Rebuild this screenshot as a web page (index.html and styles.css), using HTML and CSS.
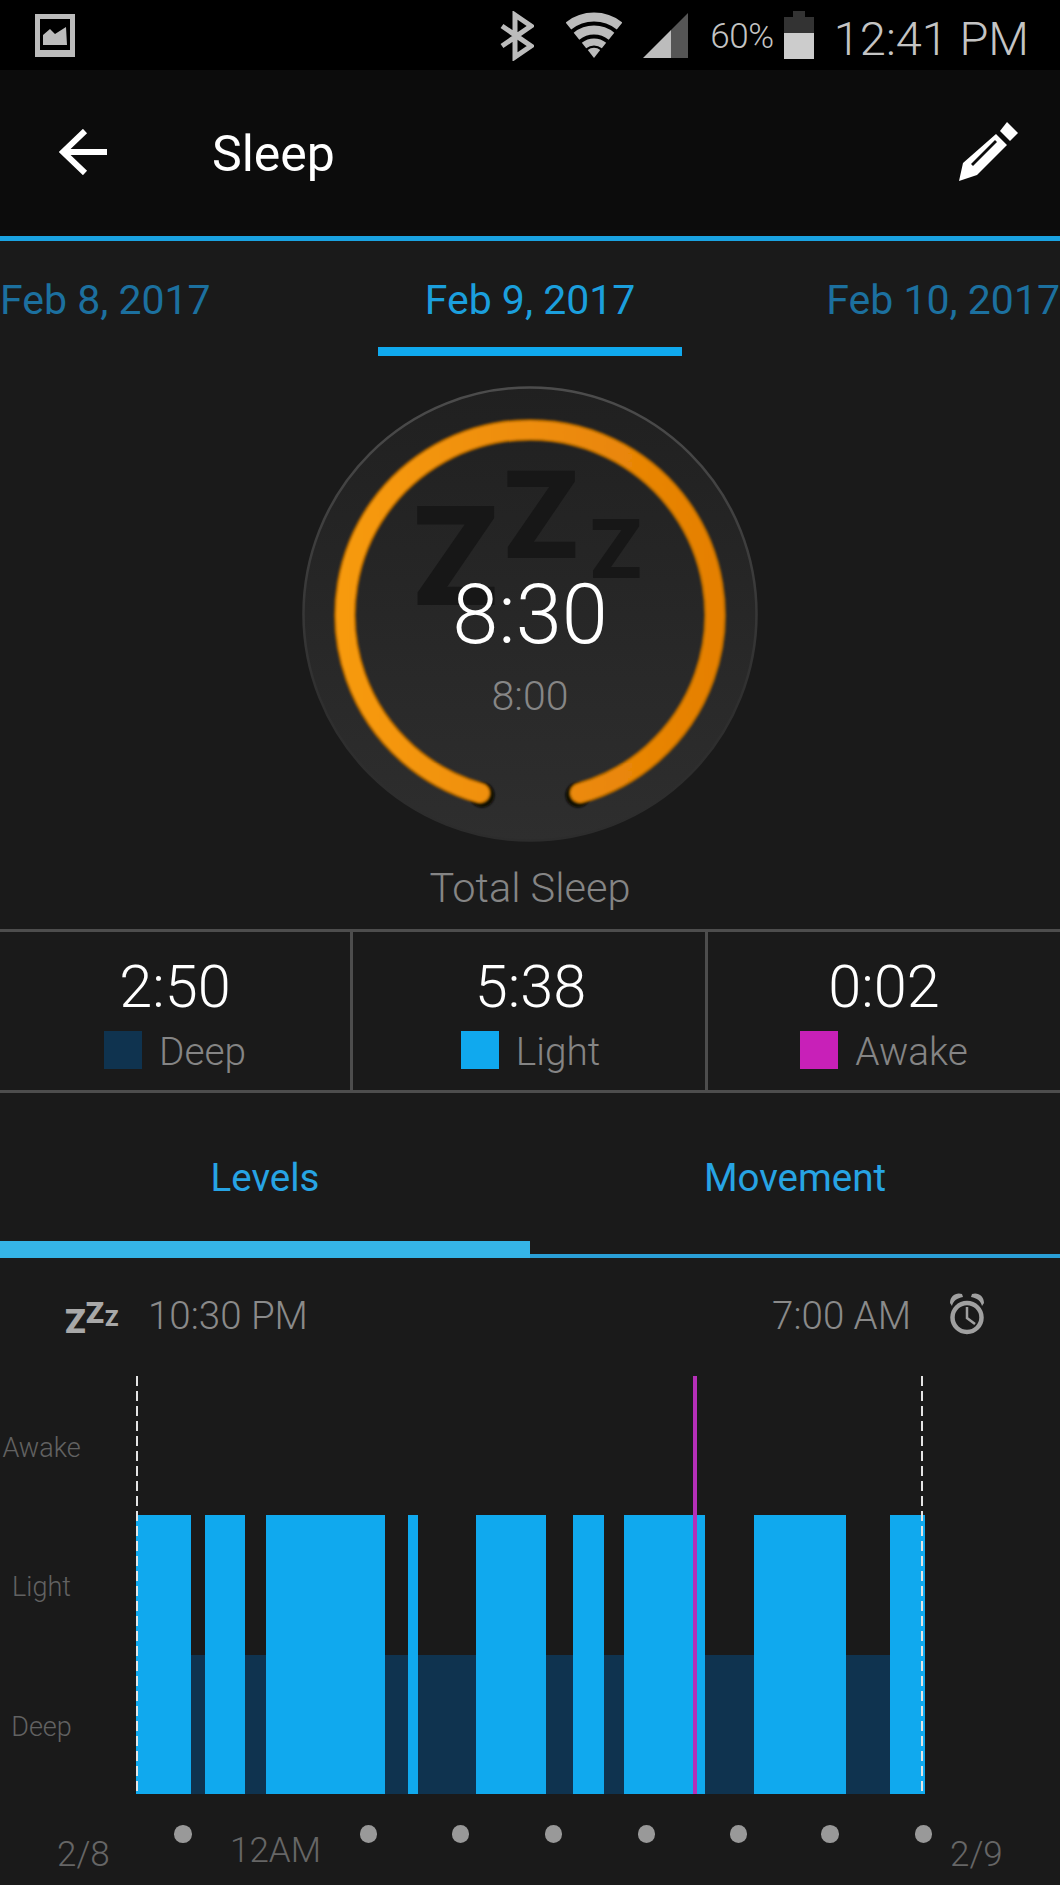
FILE: index.html
```html
<!DOCTYPE html>
<html lang="en">
<head>
<meta charset="utf-8">
<title>Sleep</title>
<link rel="stylesheet" href="styles.css">
</head>
<body>
<div class="page">
  <div class="status">
    <svg class="ic-image" viewBox="0 0 40 43"><path fill="#bcbcbc" fill-rule="evenodd" d="M0 0H40V43H0ZM5 5V36H35V5Z"/><path fill="#bcbcbc" d="M8 31V21L15 15L20 20L31 13L32 31Z"/></svg>
    <div class="status-right">
      <svg class="ic-bt" viewBox="0 0 34 50"><path fill="none" stroke="#bcbcbc" stroke-width="5" d="M2 15L31 35L15 46V4L31 15L2 35"/></svg>
      <svg class="ic-wifi" viewBox="0 0 56 46"><g fill="none" stroke="#bcbcbc" stroke-width="9"><path d="M2.400 14A41 41 0 0 1 53.600 14"/><path d="M10.500 24.200A28 28 0 0 1 45.500 24.200"/></g><path fill="none" stroke="#bcbcbc" stroke-width="7" d="M18 33.500A16 16 0 0 1 38 33.500"/><path fill="#bcbcbc" d="M28 46L21.800 38A10 10 0 0 1 34.200 38Z"/></svg>
      <svg class="ic-signal" viewBox="0 0 45 45"><path fill="#555" d="M28 45V17L45 0V45Z"/><path fill="#bcbcbc" d="M0 45L28 17V45Z"/></svg>
      <span class="batt-pct">60%</span>
      <div class="battery"><div class="batt-nub"></div><div class="batt-empty"></div><div class="batt-full"></div></div>
      <span class="clock">12:41 PM</span>
    </div>
  </div>

  <header class="appbar">
    <svg class="ic-back" viewBox="0 0 48 46"><path fill="none" stroke="#fff" stroke-width="6" d="M48 23H4M26 2L4 23L26 44"/></svg>
    <h1 class="title">Sleep</h1>
    <svg class="ic-pencil" viewBox="0 0 60 60"><path fill="#fff" d="M48 0L59 11L51 19L41 9Z"/><path fill="#fff" fill-rule="evenodd" d="M0 59L4 41L37 12L48 23L18 53ZM12 42L14 44L38 20L36 18Z"/></svg>
  </header>

  <nav class="dates">
    <span class="date">Feb 8, 2017</span>
    <span class="date date-current">Feb 9, 2017</span>
    <span class="date date-next">Feb 10, 2017</span>
  </nav>

  <section class="summary">
    <div class="dial">
      <svg class="dial-art" viewBox="0 0 456 456">
        <defs>
          <linearGradient id="face" x1="0" y1="0" x2="0" y2="1"><stop offset="0" stop-color="#202020"/><stop offset="1" stop-color="#2e2e2e"/></linearGradient>
          <linearGradient id="rim" x1="0" y1="0" x2="0" y2="1"><stop offset="0" stop-color="#4c4c4c"/><stop offset=".7" stop-color="#2f2f2f"/><stop offset="1" stop-color="#2c2c2c"/></linearGradient>
          <linearGradient id="ring" x1="0" y1="0" x2="1" y2="0"><stop offset="0" stop-color="#f79a10"/><stop offset="1" stop-color="#e58004"/></linearGradient>
          <filter id="soft"><feGaussianBlur stdDeviation="1.200"/></filter>
        </defs>
        <circle cx="228" cy="228" r="226.500" fill="url(#face)" stroke="url(#rim)" stroke-width="2.500"/>
        <circle cx="180" cy="409" r="12.500" fill="#0c0804" filter="url(#soft)"/>
        <circle cx="276" cy="409" r="12.500" fill="#0c0804" filter="url(#soft)"/>
        <path d="M178 407A185 185 0 1 1 278 407" fill="none" stroke="#a86200" stroke-width="22" stroke-linecap="round" filter="url(#soft)"/>
        <path d="M178 407A185 185 0 1 1 278 407" fill="none" stroke="url(#ring)" stroke-width="18" stroke-linecap="round" filter="url(#soft)"/>
      </svg>
      <div class="zzz"><span class="z z1">Z</span><span class="z z2">Z</span><span class="z z3">Z</span></div>
      <div class="dial-text">
        <div class="dial-value">8:30</div>
        <div class="dial-goal">8:00</div>
      </div>
    </div>
    <div class="summary-label">Total Sleep</div>
  </section>

  <section class="stats">
    <div class="stat">
      <div class="stat-value">2:50</div>
      <div class="stat-legend"><i class="swatch swatch-deep"></i><span>Deep</span></div>
    </div>
    <div class="stat">
      <div class="stat-value">5:38</div>
      <div class="stat-legend"><i class="swatch swatch-light"></i><span>Light</span></div>
    </div>
    <div class="stat">
      <div class="stat-value">0:02</div>
      <div class="stat-legend"><i class="swatch swatch-awake"></i><span>Awake</span></div>
    </div>
  </section>

  <nav class="tabs">
    <div class="tab tab-active">Levels</div>
    <div class="tab">Movement</div>
  </nav>

  <div class="times">
    <div class="times-group">
      <div class="zzz-small"><span class="zs zs1">Z</span><span class="zs zs2">Z</span><span class="zs zs3">Z</span></div>
      <span class="time">10:30 PM</span>
    </div>
    <div class="times-group">
      <span class="time">7:00 AM</span>
      <svg class="ic-alarm" viewBox="0 0 34 42"><circle cx="17" cy="24.500" r="14.500" fill="none" stroke="#a0a0a0" stroke-width="4.500"/><path fill="none" stroke="#a0a0a0" stroke-width="2.500" d="M17 14V25L25 31"/><path fill="#a0a0a0" d="M0 10C0 3 6 -1 12 1L13 4C7 5 3 8 2 13ZM34 10C34 3 28 -1 22 1L21 4C27 5 31 8 32 13Z"/></svg>
    </div>
  </div>

  <section class="chart">
    <div class="levels">
      <span>Awake</span>
      <span>Light</span>
      <span>Deep</span>
    </div>
    <div class="plot">
      <div class="bars">
        <div class="bar bar-light" style="width:55.4px"></div>
        <div class="bar bar-deep" style="width:14.5px"></div>
        <div class="bar bar-light" style="width:39.5px"></div>
        <div class="bar bar-deep" style="width:21px"></div>
        <div class="bar bar-light" style="width:119.4px"></div>
        <div class="bar bar-deep" style="width:22.6px"></div>
        <div class="bar bar-light" style="width:10px"></div>
        <div class="bar bar-deep" style="width:57.6px"></div>
        <div class="bar bar-light" style="width:70px"></div>
        <div class="bar bar-deep" style="width:27.4px"></div>
        <div class="bar bar-light" style="width:31.4px"></div>
        <div class="bar bar-deep" style="width:19.2px"></div>
        <div class="bar bar-light" style="width:81.2px"></div>
        <div class="bar bar-deep" style="width:49.2px"></div>
        <div class="bar bar-light" style="width:92px"></div>
        <div class="bar bar-deep" style="width:44px"></div>
        <div class="bar bar-light" style="width:35px"></div>
      </div>
      <div class="edge edge-start"></div>
      <div class="edge edge-end"></div>
      <div class="awake-mark" style="left:557.7px"></div>
    </div>
  </section>

  <div class="axis">
    <span class="axis-label axis-start">2/8</span>
    <span class="axis-label axis-mid">12AM</span>
    <span class="axis-label axis-end">2/9</span>
    <i class="tick" style="left:174px"></i>
    <i class="tick" style="left:359.500px"></i>
    <i class="tick" style="left:451.500px"></i>
    <i class="tick" style="left:544.500px"></i>
    <i class="tick" style="left:637.500px"></i>
    <i class="tick" style="left:729.500px"></i>
    <i class="tick" style="left:821px"></i>
    <i class="tick" style="left:914.500px"></i>
  </div>
</div>
</body>
</html>
```
FILE: styles.css
```css
* { box-sizing: border-box; }
html, body { margin: 0; padding: 0; background: #1a1a1a; }
body { font-family: Roboto, "Liberation Sans", sans-serif; }
.page { width: 1060px; height: 1885px; overflow: hidden; background: #1a1a1a; }

/* status bar */
.status { height: 70px; background: #000; display: flex; align-items: flex-start; padding: 14px 31px 0 35px; justify-content: space-between; }
.ic-image { width: 40px; height: 43px; display: block; }
.status-right { display: flex; align-items: flex-start; margin-top: -3px; }
.ic-bt { width: 34px; height: 50px; display: block; margin-top: 0; }
.ic-wifi { width: 56px; height: 46px; display: block; margin: 1px 0 0 32px; }
.ic-signal { width: 45px; height: 45px; display: block; margin: 2px 0 0 21px; }
.batt-pct { font-size: 35px; font-weight: 300; color: #c4c4c4; line-height: 41px; margin: 5px 0 0 22px; letter-spacing: -.4px; }
.battery { width: 30px; margin: 0 0 0 10px; display: flex; flex-direction: column; align-items: center; }
.batt-nub { width: 12px; height: 6px; background: #333; }
.batt-empty { width: 30px; height: 16px; background: #333; }
.batt-full { width: 30px; height: 26px; background: #ccc; }
.clock { font-size: 47px; font-weight: 300; color: #c4c4c4; line-height: 54px; margin: 1px 0 0 20px; }

/* app bar */
.appbar { height: 171px; background: #0c0c0c; border-bottom: 5px solid #1aa3e2; display: flex; align-items: center; padding: 0 41px 0 59px; }
.ic-back { width: 48px; height: 46px; display: block; margin-top: -2px; }
.title { margin: 0 0 0 105px; font-size: 50px; font-weight: 400; color: #fff; line-height: 58px; padding-top: 2px; flex: 1; }
.ic-pencil { width: 60px; height: 60px; display: block; margin-top: -2px; }

/* dates */
.dates { height: 115px; display: grid; grid-template-columns: 1fr 304px 1fr; align-items: start; padding-top: 35px; }
.date { font-size: 41px; line-height: 48px; color: #1c709f; height: 80px; white-space: nowrap; }
.date-current { color: #1b9fdd; text-align: center; border-bottom: 9px solid #10a9ee; }
.date-next { text-align: right; }

/* summary */
.summary { display: flex; flex-direction: column; align-items: center; padding-top: 30px; height: 573px; }
.dial { width: 456px; height: 456px; position: relative; flex: none; }
.dial-art { width: 456px; height: 456px; display: block; }
.zzz { position: absolute; left: 111px; top: 70px; white-space: nowrap; color: #171717; font-weight: 900; line-height: 1; height: 130px; }
.z { display: inline-block; }
.z1 { font-size: 139px; }
.z2 { font-size: 122px; vertical-align: 47px; margin-left: 6px; }
.z3 { font-size: 84px; vertical-align: 27px; margin-left: 12px; }
.dial-text { position: absolute; left: 0; right: 0; top: 179px; display: flex; flex-direction: column; align-items: center; }
.dial-value { font-size: 83px; font-weight: 300; line-height: 100px; color: #fff; }
.dial-goal { font-size: 41px; font-weight: 300; line-height: 52px; color: #868686; margin-top: 5px; }
.summary-label { font-size: 41.500px; font-weight: 300; line-height: 50px; color: #858585; margin-top: 21px; }

/* stats */
.stats { height: 164px; display: grid; grid-template-columns: 353px 355px 1fr; border-top: 3px solid #4d4d4d; border-bottom: 3px solid #4d4d4d; }
.stat { display: flex; flex-direction: column; align-items: center; padding-top: 27px; border-right: 3px solid #4d4d4d; }
.stat:nth-child(2) { padding-left: 3px; }
.stat:last-child { border-right: 0; }
.stat-value { font-size: 59.500px; font-weight: 300; line-height: 56px; color: #fff; }
.stat-legend { display: flex; align-items: flex-start; gap: 17px; font-size: 38.800px; font-weight: 300; color: #858585; line-height: 48px; margin-top: 11px; }
.stat-legend span { padding-top: 2px; }
.swatch { display: block; width: 38px; height: 38px; margin-top: 5px; }
.swatch-deep { background: #0f334f; }
.swatch-light { background: #10a9ee; }
.swatch-awake { background: #c820b8; }

/* tabs */
.tabs { height: 165px; display: grid; grid-template-columns: 1fr 1fr; }
.tab { font-size: 38.500px; line-height: 46px; color: #27a4e4; text-align: center; padding-top: 62px; border-bottom: 4px solid #2a9fd6; }
.tab-active { border-bottom: 17px solid #35b4e6; }

/* time row */
.times { height: 118px; display: flex; justify-content: space-between; padding: 35px 74px 0 65px; }
.times-group { display: flex; align-items: flex-start; }
.zzz-small { width: 54px; height: 40px; white-space: nowrap; color: #a8a8a8; font-weight: 900; line-height: 40px; margin: 0 29px 0 0; }
.zs1 { font-size: 34px; }
.zs2 { font-size: 30px; vertical-align: 10px; margin-left: 0; }
.zs3 { font-size: 22px; vertical-align: 7px; margin-left: 1px; }
.time { font-size: 38.500px; font-weight: 300; line-height: 46px; color: #8a8a8a; }
.ic-alarm { width: 34px; height: 42px; display: block; margin: 0 2px 0 39px; }

/* chart */
.chart { display: flex; height: 418px; }
.levels { width: 83px; margin-right: 52.600px; padding-top: 2px; display: grid; grid-template-rows: repeat(3, 139.500px); justify-items: center; align-items: center; font-size: 27px; font-weight: 300; color: #626262; }
.plot { width: 789.400px; position: relative; }
.bars { display: flex; height: 100%; align-items: flex-end; }
.bar { flex: none; }
.bar-light { height: 279px; background: #10a9ee; }
.bar-deep { height: 139px; background: #0f334f; }
.edge { position: absolute; top: 0; bottom: 0; width: 2px; background: repeating-linear-gradient(to bottom, #e4e4e4 0 10px, transparent 10px 15px); }
.edge-start { left: 0; }
.edge-end { right: 1.500px; }
.awake-mark { position: absolute; top: 0; bottom: 0; width: 4px; background: #b52fb8; }

/* axis */
.axis { position: relative; height: 91px; }
.axis-label { position: absolute; font-size: 35px; font-weight: 300; line-height: 40px; color: #666; }
.axis-start { left: 57px; top: 41px; }
.axis-mid { left: 230px; top: 37px; }
.axis-end { left: 950px; top: 41px; }
.tick { position: absolute; top: 31px; width: 17.500px; height: 17.500px; border-radius: 50%; background: #999; }
```
